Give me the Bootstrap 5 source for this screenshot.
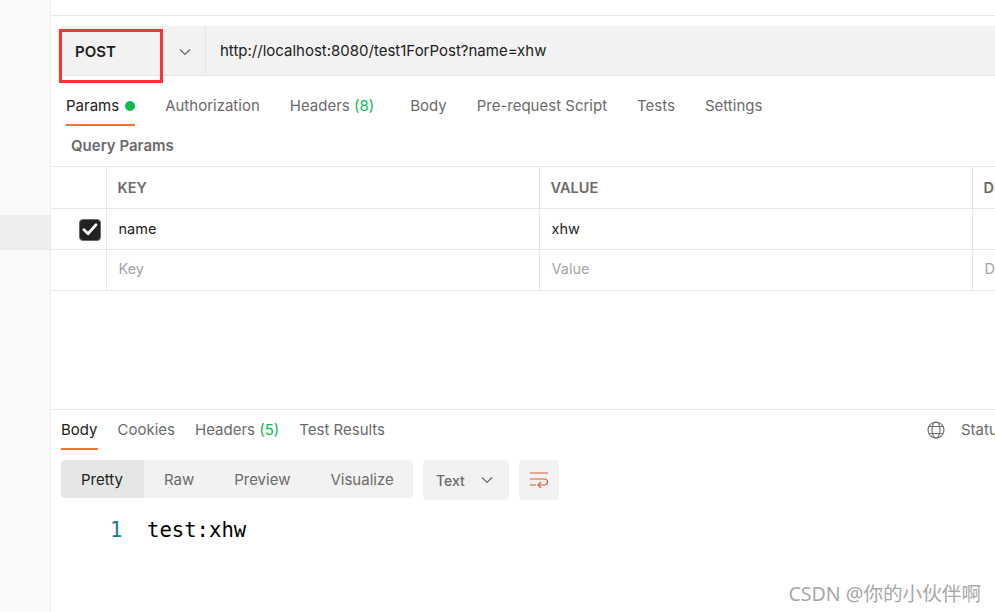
<!DOCTYPE html>
<html lang="en">
<head>
  <meta charset="UTF-8">
  <meta name="viewport" content="width=device-width, initial-scale=1">
  <title>POST test1ForPost</title>
  <link href="https://cdn.jsdelivr.net/npm/bootstrap@5.3.0/dist/css/bootstrap.min.css" rel="stylesheet">
  <style>
    html, body { height: 612px; overflow: hidden; }
    body { font-family: Inter, "Liberation Sans", sans-serif; font-size: 15px; color: #212121; background: #fff; }
    .app-shell { height: 612px; }
    .side-rail { width: 51px; flex: none; background: #f9f9f9; border-right: 1px solid #ededed; padding-top: 215px; }
    .side-active { height: 35px; background: #ededed; }
    .main-pane { min-width: 0; overflow: hidden; position: relative; }
    .top-strip { height: 16px; border-bottom: 1px solid #e8e8e8; }
    .req-area { height: 394px; padding-top: 10px; border-bottom: 1px solid #e8e8e8; }
    .url-row { height: 50px; margin-left: 8px; background: #f2f2f2; border-radius: 4px 0 0 4px; border-bottom: 1px solid #e6e6e6; }
    .method-pick { width: 147px; padding: 3px 14px 0 16px; border-right: 1px solid #e4e4e4; font-weight: 600; }
    .url-text { padding: 2px 0 0 14px; }
    .red-box { position: absolute; left: 8px; top: 29px; width: 104px; height: 54px; border: 3px solid #ff3333; }
    .tab-strip { gap: 30px; }
    .tab-item { color: #6b6b6b; white-space: nowrap; padding-bottom: 7px; border-bottom: 2px solid transparent; }
    .tab-item.is-on { color: #212121; border-bottom-color: #ff6c37; }
    .tab-wide { margin-right: 6px; }
    .req-tabs { margin: 19px 0 0 15px; line-height: 22px; }
    .res-tabs { margin: 9px 0 0 10px; line-height: 22px; gap: 20px; }
    .tab-count { color: #0cbb52; }
    .tab-dot { display: inline-block; width: 10px; height: 10px; border-radius: 50%; background: #0cbb52; margin-left: 6px; }
    .qp-title { margin: 9px 0 9px 20px; line-height: 22px; font-weight: 600; color: #6b6b6b; }
    .param-wrap { width: 1100px; }
    .param-table { table-layout: fixed; width: 1100px; margin: 0; border-top: 1px solid #e8e8e8; }
    .param-table td, .param-table th { height: 41px; padding: 0 0 0 12px; vertical-align: middle; border-bottom: 1px solid #e8e8e8; border-right: 1px solid #e8e8e8; font-size: 14.5px; color: #212121; box-shadow: none; }
    .param-table th { height: 42px; padding-left: 11px; font-weight: 600; color: #6b6b6b; }
    .param-table td.hint-cell { color: #a6a6a6; padding-bottom: 2px; }
    .param-table td.check-cell { padding: 0 5px 0 0; text-align: right; }
    .check-box { display: inline-flex; width: 22px; height: 22px; border-radius: 4px; background: #212121; border: 1px solid #6b6b6b; align-items: center; justify-content: center; vertical-align: middle; }
    .status-area { position: absolute; left: 876px; top: 419px; color: #6b6b6b; gap: 16px; line-height: 22px; white-space: nowrap; }
    .res-tools { margin: 10px 0 0 10px; gap: 10px; }
    .pill-group { height: 38px; background: #f2f2f2; border-radius: 4px; width: 352px; }
    .pill-item { padding: 0 20px; line-height: 40px; color: #6b6b6b; white-space: nowrap; }
    .pill-item.is-on { background: #e6e6e6; color: #212121; border-radius: 4px 0 0 4px; padding: 0 21px 0 20px; }
    .fmt-pick { width: 86px; height: 40px; background: #f2f2f2; border-radius: 4px; padding: 0 16px 0 13px; color: #6b6b6b; font-weight: 500; font-size: 14px; }
    .wrap-btn { width: 40px; height: 40px; background: #f2f2f2; border-radius: 4px; }
    .code-line { margin: 16px 0 0 59px; font-family: "DejaVu Sans Mono", "Liberation Mono", monospace; font-size: 20.6px; line-height: 28px; color: #000; }
    .line-no { color: #1d7a99; width: 37px; flex: none; }
    .mark-text { position: absolute; right: 14px; bottom: 5px; font-family: "Noto Sans", "Noto Sans CJK SC", sans-serif; font-size: 19.6px; line-height: 26px; color: #a8a8a8; white-space: nowrap; }
  </style>
</head>
<body>
<div class="app-shell d-flex">
  <div class="side-rail"><div class="side-active"></div></div>

  <div class="main-pane flex-grow-1">
    <div class="top-strip"></div>

    <div class="req-area">
      <div class="url-row d-flex align-items-center">
        <div class="method-pick h-100 d-flex align-items-center justify-content-between">
          <span>POST</span>
          <svg width="12" height="8" viewBox="0 0 12 8" fill="none" stroke="#6b6b6b" stroke-width="1.2"><path d="M1 1.5l5 5 5-5"/></svg>
        </div>
        <div class="url-text text-nowrap">http://localhost:8080/test1ForPost?name=xhw</div>
      </div>
      <div class="red-box"></div>

      <div class="req-tabs tab-strip d-flex">
        <div class="tab-item is-on">Params<span class="tab-dot"></span></div>
        <div class="tab-item">Authorization</div>
        <div class="tab-item tab-wide">Headers <span class="tab-count">(8)</span></div>
        <div class="tab-item">Body</div>
        <div class="tab-item">Pre-request Script</div>
        <div class="tab-item">Tests</div>
        <div class="tab-item">Settings</div>
      </div>

      <div class="qp-title">Query Params</div>

      <div class="param-wrap">
        <table class="table param-table">
          <colgroup><col style="width:55px"><col style="width:433px"><col style="width:433px"><col></colgroup>
          <thead>
            <tr><th></th><th>KEY</th><th>VALUE</th><th>DESCRIPTION</th></tr>
          </thead>
          <tbody>
            <tr>
              <td class="check-cell">
                <span class="check-box">
                  <svg width="16" height="13" viewBox="0 0 16 13" fill="none" stroke="#fff" stroke-width="2.8" stroke-linecap="round" stroke-linejoin="round"><path d="M2 6.8l4 3.9 8-8.9"/></svg>
                </span>
              </td>
              <td>name</td><td>xhw</td><td></td>
            </tr>
            <tr><td></td><td class="hint-cell">Key</td><td class="hint-cell">Value</td><td class="hint-cell">Description</td></tr>
          </tbody>
        </table>
      </div>
    </div>

    <div class="res-tabs d-flex">
      <div class="tab-item is-on">Body</div>
      <div class="tab-item">Cookies</div>
      <div class="tab-item">Headers <span class="tab-count">(5)</span></div>
      <div class="tab-item">Test Results</div>
    </div>
    <div class="status-area d-flex align-items-center">
      <svg width="18" height="18" viewBox="0 0 18 18" fill="none" stroke="#6b6b6b" stroke-width="1.1"><circle cx="9" cy="9" r="8"/><ellipse cx="9" cy="9" rx="4" ry="8"/><path d="M2 5.5h14M2 12.5h14"/></svg>
      <span>Status: 200 OK</span>
    </div>

    <div class="res-tools d-flex align-items-start">
      <div class="pill-group d-flex justify-content-between overflow-hidden">
        <div class="pill-item is-on">Pretty</div>
        <div class="pill-item">Raw</div>
        <div class="pill-item">Preview</div>
        <div class="pill-item">Visualize</div>
      </div>
      <div class="fmt-pick d-flex align-items-center justify-content-between">
        <span>Text</span>
        <svg width="12" height="8" viewBox="0 0 12 8" fill="none" stroke="#6b6b6b" stroke-width="1.2"><path d="M1 1.5l5 5 5-5"/></svg>
      </div>
      <div class="wrap-btn d-flex align-items-center justify-content-center">
        <svg width="20" height="18" viewBox="0 0 20 18" fill="none" stroke="#dd5a33" stroke-width="1.2"><path d="M1 2h18M1 8h14.5a3 3 0 0 1 0 6H9"/><path d="M12 11l-3 3 3 3M1 14h6"/></svg>
      </div>
    </div>

    <div class="code-line d-flex">
      <span class="line-no">1</span>
      <span>test:xhw</span>
    </div>

    <div class="mark-text">CSDN @你的小伙伴啊</div>
  </div>
</div>

<script src="https://cdn.jsdelivr.net/npm/bootstrap@5.3.0/dist/js/bootstrap.bundle.min.js"></script>
</body>
</html>
